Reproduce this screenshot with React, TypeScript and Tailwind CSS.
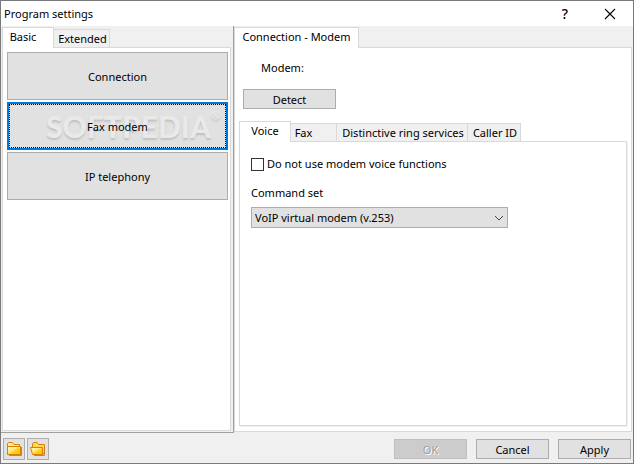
import { useState } from "react";
import type { ReactNode } from "react";

function Tab({ active, className, children, first }: { active?: boolean; className: string; children: ReactNode; first?: boolean }) {
  return (
    <button
      type="button"
      role="tab"
      aria-selected={!!active}
      className={`${className} whitespace-nowrap border-t border-r border-[#d9d9d9] ${first ? "border-l" : ""} ${
        active ? "-mb-px h-[21px] bg-white pb-0.5" : "h-[18px] bg-[#f0f0f0]"
      }`}
    >
      {children}
    </button>
  );
}

function BigButton({ children, selected, onClick }: { children: ReactNode; selected: boolean; onClick: () => void }) {
  return (
    <button
      type="button"
      onClick={onClick}
      className={`relative h-12 w-full bg-[#e1e1e1] pt-0.5 ${selected ? "border-2 border-[#0078d7]" : "border border-[#adadad]"}`}
    >
      {selected && <Watermark />}
      {selected && <span className="absolute inset-0 border border-dotted border-black" />}
      <span className="relative">{children}</span>
    </button>
  );
}

function Watermark() {
  return (
    <span
      aria-hidden="true"
      className="pointer-events-none absolute inset-y-0 right-1.5 flex items-center font-['Lato'] text-[30px] leading-none font-black text-[#e9e9e9] [text-shadow:0_2px_2px_rgb(0_0_0/0.14)]"
    >
      SOFTPEDIA<sup className="-top-2.5 text-[11px]">®</sup>
    </span>
  );
}

function FolderIcon({ open }: { open?: boolean }) {
  return (
    <svg viewBox="0 0 16 16" className="size-4" aria-hidden="true">
      <defs>
        <linearGradient id={open ? "fo" : "fc"} x1="0" y1="0" x2="1" y2="1">
          <stop offset="0" stopColor="#fff8c8" />
          <stop offset="0.45" stopColor="#ffe678" />
          <stop offset="0.55" stopColor="#ffd21c" />
          <stop offset="1" stopColor="#f8c000" />
        </linearGradient>
      </defs>
      {open ? (
        <>
          <path d="M4 14.5H14.5V5" fill="none" stroke="#a08c70" />
          <path d="M2.5 6V2.5L3.5 1.5H7L8.5 3.5H14.5V11L13 13.5H3z" fill="#ffd850" stroke="#dc7f08" />
          <path d="M.5 6.5H12.5V13.5H2.5z" fill="url(#fo)" stroke="#dc7f08" />
        </>
      ) : (
        <>
          <path d="M3 14.5H15.5V6" fill="none" stroke="#a08c70" />
          <path d="M1.5 13.5V2.5L2.5 1.5H6.5L8 3.5H13.5V5.5H14.5V13.5z" fill="#ffec98" stroke="#dc7f08" />
          <path d="M1.5 5.5H14.5V13.5H1.5z" fill="url(#fc)" stroke="#dc7f08" />
        </>
      )}
    </svg>
  );
}

const dialogButton = "h-5 border border-[#adadad] bg-[#e1e1e1] pt-0.5";

export default function App() {
  const [page, setPage] = useState("Fax modem");
  return (
    <div className="flex min-h-screen flex-col border border-[#7a7a7a] bg-[#f0f0f0] font-['Noto_Sans',sans-serif] text-[11px] leading-4 text-black">
      <header className="flex h-[25px] shrink-0 items-center bg-white pr-[17px] pl-[3px]">
        <h1 className="flex-1">Program settings</h1>
        <button type="button" aria-label="Help" className="mr-[33px] w-3 text-sm leading-4 font-medium">?</button>
        <button type="button" aria-label="Close">
          <svg viewBox="0 0 12 12" className="size-3" aria-hidden="true">
            <path d="M1 1L11 11M11 1L1 11" stroke="#000" strokeWidth="1.1" />
          </svg>
        </button>
      </header>

      <main className="flex flex-1">
        <section className="flex w-[233px] shrink-0 flex-col border-r border-b border-[#a0a0a0] pt-px pr-[2px] pb-px pl-px">
          <div role="tablist" className="relative flex items-end">
            <Tab active first className="w-[52px] pr-2.5">Basic</Tab>
            <Tab className="w-14 pl-0.5">Extended</Tab>
          </div>
          <div className="flex flex-1 flex-col gap-0.5 border border-[#d9d9d9] bg-white pt-1 pr-[2px] pl-1">
            {["Connection", "Fax modem", "IP telephony"].map((name) => (
              <BigButton key={name} selected={page === name} onClick={() => setPage(name)}>
                {name}
              </BigButton>
            ))}
          </div>
        </section>

        <section className="flex flex-1 flex-col pt-px pr-px pb-px">
          <div role="tablist" className="relative flex items-end">
            <Tab active first className="w-[125px]">Connection - Modem</Tab>
          </div>
          <div className="flex flex-1 flex-col border border-[#d9d9d9] bg-white pr-1 pb-[5px] pl-1">
            <p className="mt-3 ml-[22px]">Modem:</p>
            <button type="button" className={`${dialogButton} mt-[13px] ml-1 w-[93px]`}>Detect</button>
            <div role="tablist" className="relative mt-3 flex items-end">
              <Tab active first className="w-[52px] pr-2 pl-2">Voice</Tab>
              <Tab className="w-[46px] pr-5">Fax</Tab>
              <Tab className="w-[131px] pl-0.5">Distinctive ring services</Tab>
              <Tab className="w-[53px] pl-0.5">Caller ID</Tab>
            </div>
            <div className="flex flex-1 flex-col items-start border border-[#d9d9d9] pt-3.5 pl-[11px] shadow-[1px_1px_0_#f0f0f0]">
              <label className="flex items-center gap-[3px]">
                <input type="checkbox" className="size-[13px] appearance-none border border-[#333] bg-white checked:bg-[#0078d7]" />
                Do not use modem voice functions
              </label>
              <label htmlFor="command-set" className="mt-[13px]">Command set</label>
              <div className="relative mt-1.5 w-[257px]">
                <select id="command-set" className="block h-[21px] w-full appearance-none border border-[#adadad] bg-[#e1e1e1] pl-[3px]">
                  <option>VoIP virtual modem (v.253)</option>
                </select>
                <svg viewBox="0 0 10 6" className="pointer-events-none absolute top-2 right-1 h-1.5 w-2.5" aria-hidden="true">
                  <path d="M1 1L5 5L9 1" fill="none" stroke="#444" />
                </svg>
              </div>
            </div>
          </div>
        </section>
      </main>

      <footer className="flex h-[30px] shrink-0 items-center px-0.5 pt-px">
        <button type="button" aria-label="Open folder" className="flex size-[22px] items-center justify-center border border-[#adadad] bg-[#e1e1e1]">
          <FolderIcon />
        </button>
        <button type="button" aria-label="Load folder" className="ml-0.5 flex size-[22px] items-center justify-center border border-[#adadad] bg-[#e1e1e1]">
          <FolderIcon open />
        </button>
        <div className="ml-auto flex gap-[9px]">
          <button type="button" disabled className="h-5 w-[73px] border border-[#bfbfbf] bg-[#ccc] pt-0.5 text-[#a0a0a0] [text-shadow:1px_1px_0_#fff]">OK</button>
          <button type="button" className={`${dialogButton} w-[73px]`}>Cancel</button>
          <button type="button" className={`${dialogButton} w-[73px]`}>Apply</button>
        </div>
      </footer>
    </div>
  );
}
